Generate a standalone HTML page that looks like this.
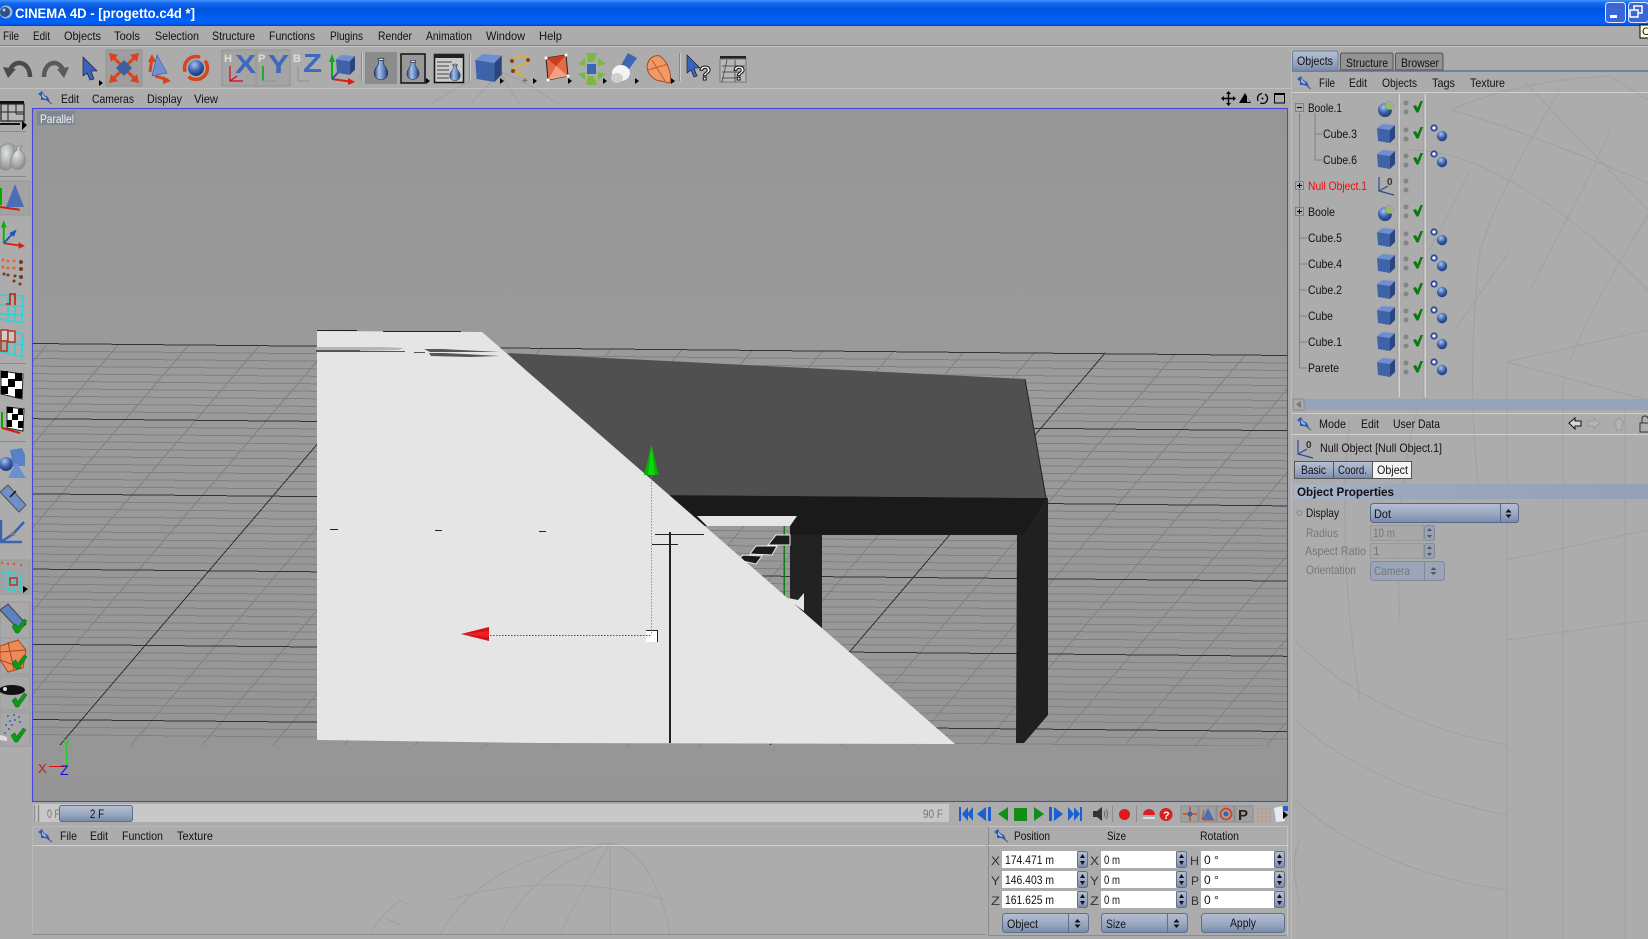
<!DOCTYPE html>
<html><head><meta charset="utf-8"><title>CINEMA 4D</title>
<style>
html,body{margin:0;padding:0;background:#acacac;overflow:hidden}
svg{display:block}
text{font-family:"Liberation Sans",sans-serif;font-size:12px;fill:#111}
.g{fill:#777}
.w{stroke:#a0a0a0;fill:none;stroke-width:1}
</style></head><body>
<svg width="1648" height="939" viewBox="0 0 1648 939" xmlns="http://www.w3.org/2000/svg">
<defs>
<linearGradient id="title" x1="0" y1="0" x2="0" y2="1"><stop offset="0" stop-color="#3d93ff"/><stop offset=".12" stop-color="#1668ee"/><stop offset=".35" stop-color="#0053dd"/><stop offset=".8" stop-color="#0062f8"/><stop offset=".92" stop-color="#005cf0"/><stop offset="1" stop-color="#0042bb"/></linearGradient>
<linearGradient id="vp" x1="0" y1="0" x2="0" y2="1"><stop offset="0" stop-color="#969696"/><stop offset=".4" stop-color="#9b9b9b"/><stop offset="1" stop-color="#959595"/></linearGradient>
<linearGradient id="btn" x1="0" y1="0" x2="0" y2="1"><stop offset="0" stop-color="#b4bfd2"/><stop offset=".6" stop-color="#97a5bf"/><stop offset="1" stop-color="#7888a8"/></linearGradient>
<linearGradient id="band" x1="0" y1="0" x2="1" y2="0"><stop offset="0" stop-color="#a9b4c8"/><stop offset=".3" stop-color="#9aa7bd"/><stop offset="1" stop-color="#94a0b7"/></linearGradient>
<linearGradient id="vase" x1="0" y1="0" x2="1" y2="0"><stop offset="0" stop-color="#24407a"/><stop offset=".35" stop-color="#a9c0e6"/><stop offset=".7" stop-color="#5f82bd"/><stop offset="1" stop-color="#1d3566"/></linearGradient>
<radialGradient id="ball" cx=".4" cy=".3" r=".8"><stop offset="0" stop-color="#a9c2ef"/><stop offset=".5" stop-color="#3d62ad"/><stop offset="1" stop-color="#14295c"/></radialGradient>
<radialGradient id="ballg" cx=".4" cy=".35" r=".8"><stop offset="0" stop-color="#dfe6e6"/><stop offset=".6" stop-color="#a8a8a8"/><stop offset="1" stop-color="#777"/></radialGradient>
<clipPath id="gclip"><polygon points="33,342.500 1287,354.500 1287,746 33,746"/></clipPath>
<clipPath id="zeroclip"><rect x="40" y="804" width="20" height="20"/></clipPath>

<symbol id="pin" viewBox="0 0 16 14" overflow="visible"><polygon points="1,3 5,0 7,4 11,6 13,11 8,9 4,9 4,5" fill="#2f58b0"/><polygon points="5,2 7,5 10,7 8,8 5,6" fill="#9db8ea"/><line x1="11" y1="10" x2="15" y2="13" stroke="#555"/></symbol>
<symbol id="cube" viewBox="0 0 18 19" overflow="visible"><polygon points="0,4 13,6 13,19 1,17" fill="#3f63a8"/><polygon points="0,4 5,0 18,1 13,6" fill="#6f90d0"/><polygon points="13,6 18,1 18,14 13,19" fill="#2b467e"/></symbol>
<symbol id="check" viewBox="0 0 10 12" overflow="visible"><path d="M0 5L3 4L4.500 7L7.500 0H10L5.500 11.500H3.500Z" fill="#087a0e"/></symbol>
<symbol id="dots" viewBox="0 0 6 14" overflow="visible"><circle cx="3" cy="3" r="2.500" fill="#858585"/><circle cx="3" cy="12" r="2.500" fill="#858585"/></symbol>
<symbol id="tag" viewBox="0 0 18 16" overflow="visible"><circle cx="4" cy="4" r="3.600" fill="#2a4b94"/><circle cx="4" cy="4" r="1.700" fill="#eef"/><circle cx="12" cy="12" r="5.200" fill="url(#ball)"/></symbol>
<symbol id="boole" viewBox="0 0 18 18" overflow="visible"><circle cx="8" cy="10" r="7" fill="url(#ball)"/><path d="M8 3A7 7 0 0 1 15 10L10 9Z" fill="#93c24e"/><path d="M9 2C14 1 17 4 17 9" stroke="#a2a2a2" fill="none" stroke-width="2"/></symbol>
<symbol id="nullo" viewBox="0 0 18 20" overflow="visible"><path d="M1 1V15L16 19M1 15L10 10" stroke="#2a4b94" fill="none" stroke-width="1.200"/><text x="9" y="9" style="font-size:10px;font-weight:bold;fill:#333">0</text></symbol>
<symbol id="vases" viewBox="0 0 24 30" overflow="visible"><path d="M9 1h6v6c0 3 6 7 6 13 0 6-4 9-9 9s-9-3-9-9c0-6 6-10 6-13z" fill="url(#vase)" stroke="#1d2a44" stroke-width=".8"/><ellipse cx="12" cy="2" rx="4" ry="1.500" fill="#d5dff0" stroke="#223"/></symbol>
<symbol id="axes" viewBox="0 0 26 30" overflow="visible"><path d="M3 25V6" stroke="#06b00a" stroke-width="2"/><polygon points="3,0 0,8 6,8" fill="#06b00a"/><path d="M3 25L24 28" stroke="#d62010" stroke-width="2"/><polygon points="26,28 19,24 19,31" fill="#d62010"/><path d="M3 25L14 13" stroke="#1a55c4" stroke-width="2"/><polygon points="17,10 9,14 14,18" fill="#1a55c4"/></symbol>
<symbol id="greenck" viewBox="0 0 16 15" overflow="visible"><path d="M0 8L4 5L6 9L13 0L16 2L7 15H4Z" fill="#0a9a14" stroke="#0c5e10" stroke-width=".5"/></symbol>
</defs>

<!-- base -->
<rect width="1648" height="939" fill="#acacac"/>

<!-- faint wireframe -->
<g class="w">
<path d="M1450 110C1490 120 1570 150 1648 183M1451 110C1500 88 1560 78 1610 76L1648 100M1410 150C1480 150 1570 210 1648 290M1525 82C1560 120 1590 150 1648 210"/>
<path d="M1560 90C1530 140 1500 190 1480 250M1610 130C1590 180 1560 230 1530 290M1648 215C1620 260 1590 310 1570 360M1455 330L1510 250M1430 250L1470 170"/>
<path d="M1507 362L1648 330M1507 362L1648 400M1507 362V939M1563 380V939M1625 400V939M1507 560L1648 530M1507 640L1648 620"/>
<path d="M1295 640C1340 690 1420 730 1507 745M1295 720C1350 770 1430 800 1507 815M1295 800C1350 850 1430 880 1507 890"/>
<path d="M1420 400C1400 470 1395 540 1400 620M1350 420C1340 500 1345 600 1360 700M1480 250C1470 340 1470 420 1480 500"/>
<path d="M440 935C470 880 530 850 610 843C640 850 660 880 670 935M500 935C520 890 560 860 610 843M560 935C575 900 595 870 610 843M610 843V935M450 900C510 880 600 880 665 900"/>
<path d="M370 935C380 915 395 905 400 900L410 905M385 918L400 925"/>
<path d="M430 105C450 90 480 75 500 72C520 78 540 92 560 105M470 105L500 72L520 105"/>
<path d="M1300 905C1295 880 1290 860 1300 840"/>
</g>

<!-- title bar -->
<rect width="1648" height="26" fill="url(#title)"/>
<circle cx="6" cy="12" r="6.500" fill="#9fb6cc"/><circle cx="5" cy="12" r="5" fill="#2a4f8a"/><circle cx="4" cy="10" r="1.500" fill="#bcd"/>
<text x="15" y="18" textLength="180" lengthAdjust="spacingAndGlyphs" style="font-size:14px;font-weight:bold;fill:#fff">CINEMA 4D - [progetto.c4d *]</text>
<rect x="1605.500" y="2.500" width="20" height="20" rx="3" fill="#3a66d8" stroke="#dfe8ff"/><rect x="1610" y="15" width="7" height="3" fill="#fff"/>
<rect x="1628.500" y="2.500" width="20" height="20" rx="3" fill="#3a66d8" stroke="#dfe8ff"/><rect x="1634" y="6" width="8" height="7" fill="none" stroke="#fff" stroke-width="1.500"/><rect x="1630" y="10" width="8" height="7" fill="#3a66d8" stroke="#fff" stroke-width="1.500"/>
<rect x="1640" y="25" width="9" height="13" fill="#ffffe1" stroke="#000"/><text x="1642" y="35" style="font-size:11px">C</text>

<!-- main menu -->
<g>
<text x="3" y="40" textLength="16" lengthAdjust="spacingAndGlyphs">File</text>
<text x="33" y="40" textLength="17" lengthAdjust="spacingAndGlyphs">Edit</text>
<text x="64" y="40" textLength="37" lengthAdjust="spacingAndGlyphs">Objects</text>
<text x="114" y="40" textLength="26" lengthAdjust="spacingAndGlyphs">Tools</text>
<text x="155" y="40" textLength="44" lengthAdjust="spacingAndGlyphs">Selection</text>
<text x="212" y="40" textLength="43" lengthAdjust="spacingAndGlyphs">Structure</text>
<text x="269" y="40" textLength="46" lengthAdjust="spacingAndGlyphs">Functions</text>
<text x="330" y="40" textLength="33" lengthAdjust="spacingAndGlyphs">Plugins</text>
<text x="378" y="40" textLength="34" lengthAdjust="spacingAndGlyphs">Render</text>
<text x="426" y="40" textLength="46" lengthAdjust="spacingAndGlyphs">Animation</text>
<text x="486" y="40" textLength="39" lengthAdjust="spacingAndGlyphs">Window</text>
<text x="539" y="40" textLength="23" lengthAdjust="spacingAndGlyphs">Help</text>
</g>
<rect y="45" width="1648" height="1" fill="#7e7e7e"/><rect y="46" width="1648" height="1" fill="#c9c9c9"/>
<rect x="0" y="88" width="1292" height="1" fill="#c0c0c0"/>

<!-- top toolbar -->
<path d="M30 77C30 62 15 58 10 70" fill="none" stroke="#4a4a4a" stroke-width="4.500"/><polygon points="3,67 16,69 8,78" fill="#4a4a4a"/>
<path d="M44 77C44 62 58 58 63 70" fill="none" stroke="#5a5a5a" stroke-width="4.500"/><polygon points="69,67 57,69 64,78" fill="#5a5a5a"/>
<polygon points="83,57 97,71 91,71 94,79 90,80 87,73 83,76" fill="#3a62c0" stroke="#112" stroke-width=".6"/><polygon points="99,80 103,83 99,86" fill="#000"/>
<rect x="106" y="50" width="36" height="36" fill="#9e9e9e" stroke="#929292"/>
<path d="M112 56L136 80M136 56L112 80" stroke="#d8431c" stroke-width="3"/><polygon points="109,53 118,55 111,62" fill="#d8431c"/><polygon points="139,53 130,55 137,62" fill="#d8431c"/><polygon points="109,83 118,81 111,74" fill="#d8431c"/><polygon points="139,83 130,81 137,74" fill="#d8431c"/><polygon points="124,60 132,68 124,76 116,68" fill="#3f5f9f"/>
<polygon points="157,55 167,73 152,76" fill="#6f90cf" stroke="#3a5a9a" stroke-width=".6"/><path d="M150 72L152 58M155 76L168 80" stroke="#d8431c" stroke-width="3"/><polygon points="152,54 148,62 156,62" fill="#d8431c"/><polygon points="171,81 163,76 163,84" fill="#d8431c"/>
<circle cx="196" cy="68" r="8" fill="url(#ball)"/><circle cx="196" cy="68" r="11.500" fill="none" stroke="#d8431c" stroke-width="3.500" stroke-dasharray="26 6"/>
<rect x="222" y="50" width="34" height="36" fill="#a4a4a4" stroke="#959595"/><rect x="256" y="50" width="34" height="36" fill="#a4a4a4" stroke="#959595"/>
<text x="224" y="62" style="font-size:11px;font-weight:bold;fill:#ddd">H</text><text x="258" y="62" style="font-size:11px;font-weight:bold;fill:#ddd">P</text><text x="293" y="62" style="font-size:11px;font-weight:bold;fill:#ddd">B</text>
<text x="235" y="73" style="font-size:26px;font-weight:bold;fill:#3f69bb" textLength="21" lengthAdjust="spacingAndGlyphs">X</text>
<text x="268" y="73" style="font-size:26px;font-weight:bold;fill:#3f69bb" textLength="21" lengthAdjust="spacingAndGlyphs">Y</text>
<text x="303" y="72" style="font-size:26px;font-weight:bold;fill:#3f69bb" textLength="19" lengthAdjust="spacingAndGlyphs">Z</text>
<path d="M230 66V81H243M230 81L237 76" stroke="#d02" stroke-width="1.200" fill="none"/><path d="M263 66V81" stroke="#0a0" stroke-width="1.500"/><path d="M263 81H276" stroke="#999" stroke-width="1.500"/><path d="M298 66V81H310" stroke="#999" stroke-width="1.500" fill="none"/>
<use href="#axes" x="329" y="54" width="26" height="30"/><use href="#cube" x="336" y="54" width="19" height="22"/>
<rect x="361" y="53" width="1" height="28" fill="#888"/><rect x="362" y="53" width="1" height="28" fill="#ccc"/>
<rect x="365" y="52" width="32" height="32" fill="#8c8c8c"/><use href="#vases" x="372" y="56" width="18" height="26"/>
<rect x="401" y="54" width="24" height="29" fill="#989898" stroke="#111" stroke-width="1.500"/><use href="#vases" x="405" y="58" width="16" height="24"/><polygon points="426,78 430,81 426,84" fill="#000"/>
<rect x="434.500" y="54.500" width="29" height="28" fill="#ccc" stroke="#111" stroke-width="1.500"/><rect x="434" y="54" width="30" height="4" fill="#222"/><path d="M437 62h15M437 66h12M437 70h12M437 74h12M437 78h12" stroke="#444"/><use href="#vases" x="448" y="62" width="14" height="21"/>
<rect x="469" y="53" width="1" height="28" fill="#888"/><rect x="470" y="53" width="1" height="28" fill="#ccc"/>
<use href="#cube" x="475" y="54" width="27" height="28"/><polygon points="500,78 504,81 500,84" fill="#000"/>
<path d="M512 61C520 52 532 56 528 61C524 66 514 66 512 71C512 74 522 72 524 77" fill="none" stroke="#d9b13a" stroke-width="2"/><circle cx="512" cy="61" r="2" fill="#8a3d1c"/><circle cx="528" cy="60" r="2" fill="#8a3d1c"/><circle cx="513" cy="71" r="2" fill="#8a3d1c"/><text x="522" y="84" style="font-size:10px;fill:#555">+</text><polygon points="533,78 537,81 533,84" fill="#000"/>
<polygon points="546,58 566,55 568,76 548,80" fill="#e56b43" stroke="#222"/><polygon points="546,58 556,66 566,55" fill="#c6401e"/><polygon points="548,80 556,66 568,76" fill="#f2a184"/><circle cx="546" cy="58" r="1.500" fill="#fff"/><circle cx="566" cy="55" r="1.500" fill="#fff"/><circle cx="548" cy="80" r="1.500" fill="#fff"/><circle cx="568" cy="76" r="1.500" fill="#fff"/><polygon points="568,78 572,81 568,84" fill="#000"/>
<rect x="587" y="64" width="9" height="10" fill="#3b66b8"/><polygon points="586,53 597,53 594,62 588,62" fill="#7bba42"/><polygon points="586,85 597,85 594,76 588,76" fill="#7bba42"/><polygon points="578,64 585,58 585,66" fill="#7bba42"/><polygon points="578,74 585,80 585,72" fill="#7bba42"/><polygon points="606,64 598,58 598,66" fill="#7bba42"/><polygon points="606,74 598,80 598,72" fill="#7bba42"/><polygon points="603,78 607,81 603,84" fill="#000"/>
<polygon points="628,53 637,58 627,72 620,67" fill="#3d66b4"/><ellipse cx="621" cy="73" rx="9" ry="8" fill="#f4f4f4"/><ellipse cx="617" cy="78" rx="6" ry="5" fill="#cfcfcf"/><polygon points="635,78 639,81 635,84" fill="#000"/>
<path d="M647 66C649 56 656 55 660 56C668 62 672 74 670 83L656 80C650 76 647 72 647 66Z" fill="#f09a6a" stroke="#a64a20"/><path d="M652 60L665 81M648 70L668 64" stroke="#c8582a" fill="none"/><polygon points="671,78 675,81 671,84" fill="#000"/>
<rect x="679" y="53" width="1" height="28" fill="#888"/><rect x="680" y="53" width="1" height="28" fill="#ccc"/>
<polygon points="687,55 700,68 694,68 697,76 694,77 691,70 687,73" fill="#3a62c0" stroke="#112" stroke-width=".6"/>
<text x="699" y="80" style="font-size:20px;font-weight:bold;fill:#fff;stroke:#111;stroke-width:1">?</text>
<rect x="720" y="56" width="26" height="3" fill="#222"/><rect x="720" y="59" width="26" height="23" fill="#b8b8b8" stroke="#777"/><path d="M722 66H745M722 72H740M722 78H740M727 60L722 82M735 60V82" stroke="#555"/>
<text x="733" y="80" style="font-size:20px;font-weight:bold;fill:#fff;stroke:#111;stroke-width:1">?</text>

<!-- left toolbar -->
<g>
<rect x="0" y="131" width="26" height="1" fill="#8a8a8a"/><rect x="0" y="176" width="26" height="1" fill="#8a8a8a"/><rect x="0" y="363" width="26" height="1" fill="#8a8a8a"/><rect x="0" y="441" width="26" height="1" fill="#8a8a8a"/>
<rect x="0" y="101" width="24" height="3" fill="#111"/><rect x="1" y="104" width="23" height="17" fill="#b8b8b8" stroke="#222" stroke-width="1.200"/><path d="M8 104V121M16 104V114M1 112H24M16 114H24" stroke="#222"/><path d="M0 124H20" stroke="#111" stroke-width="2"/><polygon points="22,121 27,125 22,130" fill="#000"/>
<path d="M0 148C3 144 10 142 14 146C16 152 15 164 9 169C5 171 1 170 0 167Z" fill="url(#ballg)" stroke="#8f8f8f"/><path d="M16 146H22L20 150C25 154 27 160 24 166C20 171 14 170 11 166C9 158 14 152 17 150Z" fill="url(#ballg)" stroke="#8f8f8f"/>
<rect x="0" y="181" width="30" height="34" fill="#a3a3a3" stroke="#999"/><polygon points="15,184 24,207 6,207" fill="#4a6fb6"/><path d="M0 207H20" stroke="#d02010" stroke-width="2" transform="rotate(8 0 207)"/><path d="M1 205V188" stroke="#0a0" stroke-width="2"/>
<use href="#axes" x="1" y="219" width="24" height="30"/>
<g fill="#e5672a"><circle cx="3" cy="260" r="1.500"/><circle cx="8" cy="261" r="1.500"/><circle cx="14" cy="261" r="1.500"/><circle cx="3" cy="267" r="1.500"/><circle cx="8" cy="268" r="1.500"/><circle cx="14" cy="268" r="1.500"/></g><g fill="#7a3a1a"><circle cx="21" cy="262" r="2"/><circle cx="21" cy="269" r="2"/><circle cx="21" cy="277" r="2"/><circle cx="15" cy="276" r="1.500"/><circle cx="8" cy="275" r="1.500"/><circle cx="14" cy="281" r="1.500"/><circle cx="4" cy="274" r="1.500"/><circle cx="20" cy="284" r="1.500"/></g>
<path d="M0 295L23 296L22 323L0 319M0 305L23 306M0 314L22 315M8 295V319M15 296V321" fill="none" stroke="#19d8df" stroke-width="1.300"/><path d="M6 304H10V294H15V305" fill="none" stroke="#b5371f" stroke-width="1.800"/>
<path d="M1 330L23 334L22 357L1 352ZM1 341L23 345M8 330V353M15 332V356" fill="none" stroke="#19d8df" stroke-width="1.300"/><rect x="1" y="330" width="7" height="11" fill="#cfcfcf" stroke="#b5371f" stroke-width="1.500"/><rect x="8" y="331" width="7" height="11" fill="#c7c7c7" stroke="#b5371f" stroke-width="1.500"/><rect x="1" y="341" width="6" height="10" fill="#aaa" stroke="#b5371f" stroke-width="1.500"/>
<polygon points="1,371 23,374 22,399 1,394" fill="#fff" stroke="#222"/><g fill="#000"><rect x="1" y="371" width="7" height="7"/><rect x="15" y="373" width="7" height="8"/><rect x="8" y="379" width="7" height="8"/><rect x="1" y="386" width="7" height="8"/><rect x="15" y="389" width="7" height="9"/></g>
<polygon points="7,407 24,409 23,431 7,428" fill="#fff" stroke="#222"/><g fill="#000"><rect x="7" y="407" width="6" height="6"/><rect x="18" y="409" width="5" height="6"/><rect x="12" y="414" width="6" height="6"/><rect x="7" y="420" width="5" height="7"/><rect x="18" y="421" width="5" height="7"/></g><path d="M2 428V412" stroke="#0a0" stroke-width="2"/><path d="M2 428L20 433" stroke="#d02010" stroke-width="2"/>
<circle cx="6" cy="464" r="7" fill="url(#ball)"/><polygon points="10,450 22,448 25,455 25,466 13,466" fill="#5a80c6"/><polygon points="16,462 26,478 8,478" fill="#6b90d2"/>
<polygon points="0,492 8,485 26,505 19,512" fill="#6f8fc8" stroke="#555" stroke-width="1"/><path d="M10 497L16 491" stroke="#112" stroke-width="1.500"/>
<path d="M1 520V542H22M1 542L13 534L24 522" stroke="#3a62ad" stroke-width="2.500" fill="none"/><circle cx="13" cy="534" r="2" fill="#777"/>
<rect x="0" y="560" width="30" height="34" fill="#a3a3a3" stroke="#999"/><path d="M3 572L21 574L20 592L4 589ZM3 581L21 583M9 572V590M15 573V591" fill="none" stroke="#19d8df"/><rect x="10" y="578" width="7" height="7" fill="none" stroke="#b5371f" stroke-width="1.500"/><g fill="#d8562a"><circle cx="2" cy="563" r="1.200"/><circle cx="8" cy="564" r="1.200"/><circle cx="14" cy="564" r="1.200"/><circle cx="21" cy="565" r="1.200"/></g><polygon points="23,586 28,589 23,593" fill="#000"/>
<rect x="0" y="602" width="30" height="36" fill="#a8a8a8" stroke="#999"/><polygon points="0,610 8,604 26,624 19,630" fill="#5f81c0" stroke="#444"/><use href="#greenck" x="12" y="617" width="15" height="18"/>
<rect x="0" y="638" width="30" height="36" fill="#a8a8a8" stroke="#999"/><polygon points="0,646 18,640 26,650 23,668 8,672 0,660" fill="#ee8a5a" stroke="#a8481f"/><path d="M0 652L26 650M0 660L22 668M8 642L14 670" stroke="#a8481f" fill="none"/><use href="#greenck" x="12" y="653" width="15" height="18"/>
<rect x="0" y="676" width="30" height="34" fill="#a8a8a8" stroke="#999"/><ellipse cx="12" cy="690" rx="13" ry="5" fill="#111"/><circle cx="5" cy="689" r="2" fill="#ddd"/><use href="#greenck" x="12" y="691" width="15" height="18"/>
<rect x="0" y="712" width="30" height="34" fill="#a8a8a8" stroke="#999"/><g fill="#3a62b0"><circle cx="8" cy="716" r="1"/><circle cx="14" cy="715" r="1"/><circle cx="19" cy="717" r="1"/><circle cx="10" cy="721" r="1"/><circle cx="15" cy="720" r="1"/><circle cx="6" cy="725" r="1"/><circle cx="12" cy="725" r="1"/><circle cx="20" cy="722" r="1"/><circle cx="9" cy="729" r="1"/><circle cx="5" cy="733" r="1"/></g><polygon points="0,735 7,737 7,741 0,740" fill="#ddd"/><use href="#greenck" x="11" y="726" width="15" height="18"/>
</g>

<!-- viewport menu -->
<use href="#pin" x="37" y="91" width="16" height="14"/>
<text x="61" y="103" textLength="18" lengthAdjust="spacingAndGlyphs">Edit</text>
<text x="92" y="103" textLength="42" lengthAdjust="spacingAndGlyphs">Cameras</text>
<text x="147" y="103" textLength="35" lengthAdjust="spacingAndGlyphs">Display</text>
<text x="194" y="103" textLength="24" lengthAdjust="spacingAndGlyphs">View</text>
<path d="M1222 98.500H1235M1228.500 92V105" stroke="#000" stroke-width="1.500"/><polygon points="1228.500,91 1226,94 1231,94" fill="#000"/><polygon points="1228.500,106 1226,103 1231,103" fill="#000"/><polygon points="1221,98.500 1224,96 1224,101" fill="#000"/><polygon points="1236,98.500 1233,96 1233,101" fill="#000"/>
<polygon points="1245,93 1239,103 1251,103" fill="#000"/><polygon points="1247,96 1250,102 1247,102" fill="#aaa"/>
<circle cx="1262.500" cy="98.500" r="5" fill="none" stroke="#000" stroke-width="1.300" stroke-dasharray="10 3"/><circle cx="1262.500" cy="98.500" r="1" fill="#000"/>
<rect x="1274.500" y="93.500" width="10" height="9.500" fill="none" stroke="#000"/><rect x="1274" y="93" width="11" height="2" fill="#000"/>

<!-- viewport -->
<rect x="33" y="108" width="1255" height="693" fill="url(#vp)"/>
<g clip-path="url(#gclip)" shape-rendering="crispEdges" fill="none">
<path stroke="#808080" stroke-width="1" d="M33 351l1255 12M33 358.500l1255 12M33 366.100l1255 12M33 373.600l1255 12M33 381.100l1255 12M33 388.600l1255 12M33 396.100l1255 12M33 403.700l1255 12M33 411.200l1255 12M33 426.200l1255 12M33 433.700l1255 12M33 441.300l1255 12M33 448.800l1255 12M33 456.300l1255 12M33 463.800l1255 12M33 471.300l1255 12M33 478.900l1255 12M33 486.400l1255 12M33 501.400l1255 12M33 508.900l1255 12M33 516.500l1255 12M33 524l1255 12M33 531.500l1255 12M33 539l1255 12M33 546.500l1255 12M33 554.100l1255 12M33 561.600l1255 12M33 576.600l1255 12M33 584.100l1255 12M33 591.700l1255 12M33 599.200l1255 12M33 606.700l1255 12M33 614.200l1255 12M33 621.700l1255 12M33 629.300l1255 12M33 636.800l1255 12M33 651.800l1255 12M33 659.300l1255 12M33 666.900l1255 12M33 674.400l1255 12M33 681.900l1255 12M33 689.400l1255 12M33 696.900l1255 12M33 704.500l1255 12M33 712l1255 12M33 727l1255 12M33 734.500l1255 12"/>
<path stroke="#808080" d="M-295 745l342 -400M-224 745l342 -400M-153 745l342 -400M-82 745l342 -400M-11 745l342 -400M131 745l342 -400M202 745l342 -400M273 745l342 -400M344 745l342 -400M415 745l342 -400M486 745l342 -400M557 745l342 -400M628 745l342 -400M699 745l342 -400M841 745l342 -400M912 745l342 -400M983 745l342 -400M1054 745l342 -400M1125 745l342 -400M1196 745l342 -400M1267 745l342 -400"/>
<path stroke="#333" d="M33 343.500l1255 12M33 418.700l1255 12M33 493.900l1255 12M33 569.100l1255 12M33 644.300l1255 12M33 719.500l1255 12"/>
<path stroke="#303030" d="M60 745l342 -400M770 745l342 -400"/>
</g>
<!-- model -->
<polygon points="507,353 1025,379 1046,498 660,495" fill="#505050"/>
<path d="M1025 379L1046 498" stroke="#222"/>
<polygon points="660,495 1048,498 1025,535 790,535 790,526 700,526" fill="#1a1a1a"/>
<polygon points="1048,498 1048,715 1024,743 1016,743 1017,535 1025,535" fill="#202020"/>
<rect x="790" y="535" width="32" height="96" fill="#222"/>
<rect x="783.500" y="526" width="1.500" height="72" fill="#0e7d12"/>
<polygon points="768,545 776,535 790,535 790,545" fill="#1a1a1a" stroke="#eee"/>
<polygon points="750,554 756,546 777,546 772,555" fill="#1a1a1a" stroke="#eee"/>
<polygon points="738,560 743,555 762,556 756,564" fill="#1a1a1a" stroke="#eee"/>
<polygon points="697,516 797,516 790,526 707,526" fill="#e5e5e5"/>
<polygon points="317,331 482,332 955,744 537,743 317,740" fill="#e5e5e5"/>
<polygon points="788,598 798,600 804,593 804,611 790,601" fill="#e5e5e5"/>
<!-- wall details -->
<rect x="317" y="330" width="40" height="1" fill="#222"/><rect x="383" y="331" width="78" height="1" fill="#222"/>
<polygon points="316,347 381,347 404,348 398,350 360,351 316,351" fill="#b5b5b5"/>
<rect x="316" y="350" width="44" height="2" fill="#555"/><rect x="360" y="351" width="45" height="1" fill="#555"/>
<polygon points="424,349 442,349 500,352 450,352 430,352" fill="#555"/><polygon points="429,353 444,353 464,354 500,356 470,357 431,356" fill="#555"/><rect x="414" y="352" width="11" height="1" fill="#555"/>
<rect x="330" y="529" width="8" height="1" fill="#222"/><rect x="435" y="530" width="7" height="1" fill="#222"/><rect x="539" y="531" width="7" height="1" fill="#222"/>
<rect x="669" y="532" width="2" height="211" fill="#222"/><rect x="655" y="534" width="49" height="1" fill="#222"/><rect x="652" y="544" width="26" height="1" fill="#222"/>
<!-- axis handle -->
<rect x="646" y="630" width="11" height="12" fill="#fff"/><path d="M646 630.500H657.500V642" stroke="#222" fill="none"/>
<line x1="651.500" y1="476" x2="651.500" y2="635" stroke="#2ed62e" stroke-dasharray="1.500 1.500"/>
<line x1="490" y1="635.500" x2="652" y2="635.500" stroke="#c02020" stroke-dasharray="1.500 1.500"/>
<polygon points="651.500,445 658.500,475 644,475" fill="#00b400"/><polygon points="651.500,445 655,475 648,475" fill="#12d012"/>
<polygon points="461,634 489,627 489,641" fill="#d41212"/><polygon points="461,634 489,631 489,637" fill="#e92222"/>
<!-- mini axes -->
<rect x="66" y="748" width="1.500" height="18" fill="#1ed11e"/><rect x="49" y="766" width="18" height="1" fill="#e01010"/>
<text x="62" y="748" style="font-size:13px;fill:#1ed11e">Y</text><text x="38" y="773" style="font-size:13px;fill:#c81818">X</text><text x="60" y="775" style="font-size:14px;fill:#1111dd">Z</text>
<rect x="37" y="111" width="38" height="14" rx="1" fill="#7f8791"/><text x="40" y="123" textLength="34" lengthAdjust="spacingAndGlyphs" style="fill:#f0f0f0">Parallel</text>
<rect x="32.500" y="108.500" width="1255" height="693" fill="none" stroke="#4848e0" stroke-width="1.100"/>

<!-- timeline -->
<rect x="33" y="804" width="916" height="18" fill="#c8c8c8"/>
<path d="M34.500 805V822M38.500 805V822" stroke="#8c8c8c" stroke-width="1.500"/>
<text x="47" y="818" class="g" textLength="13" lengthAdjust="spacingAndGlyphs" clip-path="url(#zeroclip)">0 F</text>
<rect x="59.500" y="805.500" width="73" height="16" rx="2" fill="url(#btn)" stroke="#5f6f90"/>
<text x="90" y="818" textLength="14" lengthAdjust="spacingAndGlyphs">2 F</text>
<text x="923" y="818" class="g" textLength="20" lengthAdjust="spacingAndGlyphs">90 F</text>
<!-- transport -->
<g fill="#1c5fd0"><rect x="959" y="807" width="2" height="14"/><polygon points="962,814 968,807 968,821"/><polygon points="967,814 973,807 973,821"/><polygon points="977,814 986,807 986,821"/><rect x="988" y="807" width="3" height="14"/><rect x="1049" y="807" width="3" height="14"/><polygon points="1054,807 1063,814 1054,821"/><polygon points="1068,807 1074,814 1068,821"/><polygon points="1074,807 1080,814 1074,821"/><rect x="1080" y="807" width="2" height="14"/></g>
<polygon points="998,814 1008,807 1008,821" fill="#118d18"/><rect x="1014" y="808" width="13" height="13" fill="#118d18"/><polygon points="1034,807 1044,814 1034,821" fill="#118d18"/>
<polygon points="1093,811 1097,811 1102,807 1102,821 1097,817 1093,817" fill="#333"/><path d="M1104 811C1105 813 1105 815 1104 817M1106 809C1108 812 1108 816 1106 819" stroke="#666" fill="none"/>
<rect x="1112" y="806" width="1" height="16" fill="#8c8c8c"/><circle cx="1124.500" cy="814.500" r="5.500" fill="#e01818"/><rect x="1136" y="806" width="1" height="16" fill="#8c8c8c"/>
<path d="M1143 815A6 6 0 0 1 1155 815Z" fill="#d82020"/><path d="M1143 818H1155" stroke="#ddd" stroke-width="2"/>
<circle cx="1166" cy="814.500" r="6.500" fill="#d82020"/><text x="1163" y="819" style="font-size:11px;font-weight:bold;fill:#fff">?</text>
<rect x="1181" y="806" width="17" height="16" fill="#a0a0a0" stroke="#8c8c8c"/><path d="M1190 807V821M1183 814H1197" stroke="#d8431c" stroke-width="1.500"/><circle cx="1190" cy="814" r="2.500" fill="#3f5f9f"/>
<rect x="1199" y="806" width="17" height="16" fill="#a0a0a0" stroke="#8c8c8c"/><polygon points="1208,808 1214,820 1202,820" fill="#4a6fb6"/><path d="M1202 820L1204 810M1203 820H1214" stroke="#d8431c"/>
<rect x="1217" y="806" width="17" height="16" fill="#a0a0a0" stroke="#8c8c8c"/><circle cx="1226" cy="814" r="5.500" fill="none" stroke="#d8431c" stroke-width="1.800"/><circle cx="1226" cy="814" r="2.500" fill="#3f5f9f"/>
<rect x="1235" y="806" width="18" height="16" fill="#a0a0a0" stroke="#8c8c8c"/><text x="1238" y="820" style="font-size:15px;font-weight:bold;fill:#222">P</text>
<g fill="#e8794a"><circle cx="1258" cy="809" r=".8"/><circle cx="1262" cy="809" r=".8"/><circle cx="1266" cy="809" r=".8"/><circle cx="1270" cy="809" r=".8"/><circle cx="1258" cy="813" r=".8"/><circle cx="1262" cy="813" r=".8"/><circle cx="1266" cy="813" r=".8"/><circle cx="1270" cy="813" r=".8"/><circle cx="1258" cy="817" r=".8"/><circle cx="1262" cy="817" r=".8"/><circle cx="1266" cy="817" r=".8"/><circle cx="1270" cy="817" r=".8"/><circle cx="1258" cy="821" r=".8"/><circle cx="1262" cy="821" r=".8"/><circle cx="1266" cy="821" r=".8"/><circle cx="1270" cy="821" r=".8"/></g>
<polygon points="1274,808 1282,806 1285,821 1276,822" fill="#e5e9f2"/><rect x="1283" y="806" width="5" height="5" fill="#2f5fc0"/><polygon points="1283,811 1288,815 1283,819" fill="#000"/>

<!-- bottom left panel -->
<use href="#pin" x="37" y="829" width="16" height="14"/>
<text x="60" y="840" textLength="17" lengthAdjust="spacingAndGlyphs">File</text>
<text x="90" y="840" textLength="18" lengthAdjust="spacingAndGlyphs">Edit</text>
<text x="122" y="840" textLength="41" lengthAdjust="spacingAndGlyphs">Function</text>
<text x="177" y="840" textLength="36" lengthAdjust="spacingAndGlyphs">Texture</text>
<rect x="33" y="845" width="953" height="1" fill="#cfcfcf"/><rect x="33" y="826" width="953" height="1" fill="#b8b8b8"/>
<rect x="32" y="934" width="954" height="1" fill="#8c8c8c"/><rect x="32" y="826" width="1" height="108" fill="#b8b8b8"/>

<!-- coordinates -->
<rect x="988" y="826" width="1" height="110" fill="#8c8c8c"/><rect x="988" y="826" width="300" height="1" fill="#c4c4c4"/><rect x="988" y="935" width="300" height="1" fill="#8c8c8c"/><rect x="1287" y="826" width="1" height="110" fill="#c4c4c4"/>
<rect x="988" y="845" width="300" height="1" fill="#cfcfcf"/>
<use href="#pin" x="993" y="829" width="16" height="14"/>
<text x="1014" y="840" textLength="36" lengthAdjust="spacingAndGlyphs">Position</text>
<text x="1107" y="840" textLength="19" lengthAdjust="spacingAndGlyphs">Size</text>
<text x="1200" y="840" textLength="39" lengthAdjust="spacingAndGlyphs">Rotation</text>
<g fill="#fff">
<rect x="1002" y="851" width="75" height="17"/><rect x="1002" y="871" width="75" height="17"/><rect x="1002" y="891" width="75" height="17"/>
<rect x="1101" y="851" width="75" height="17"/><rect x="1101" y="871" width="75" height="17"/><rect x="1101" y="891" width="75" height="17"/>
<rect x="1201" y="851" width="73" height="17"/><rect x="1201" y="871" width="73" height="17"/><rect x="1201" y="891" width="73" height="17"/>
</g>
<g fill="url(#btn)" stroke="#5f6f90">
<rect x="1077.500" y="851.500" width="10" height="16" rx="2"/><rect x="1077.500" y="871.500" width="10" height="16" rx="2"/><rect x="1077.500" y="891.500" width="10" height="16" rx="2"/>
<rect x="1176.500" y="851.500" width="10" height="16" rx="2"/><rect x="1176.500" y="871.500" width="10" height="16" rx="2"/><rect x="1176.500" y="891.500" width="10" height="16" rx="2"/>
<rect x="1274.500" y="851.500" width="10" height="16" rx="2"/><rect x="1274.500" y="871.500" width="10" height="16" rx="2"/><rect x="1274.500" y="891.500" width="10" height="16" rx="2"/>
</g>
<g fill="#111">
<path d="M1082.500 854l-2.500 4h5zM1082.500 865l-2.500-4h5zM1082.500 874l-2.500 4h5zM1082.500 885l-2.500-4h5zM1082.500 894l-2.500 4h5zM1082.500 905l-2.500-4h5z"/>
<path d="M1181.500 854l-2.500 4h5zM1181.500 865l-2.500-4h5zM1181.500 874l-2.500 4h5zM1181.500 885l-2.500-4h5zM1181.500 894l-2.500 4h5zM1181.500 905l-2.500-4h5z"/>
<path d="M1279.500 854l-2.500 4h5zM1279.500 865l-2.500-4h5zM1279.500 874l-2.500 4h5zM1279.500 885l-2.500-4h5zM1279.500 894l-2.500 4h5zM1279.500 905l-2.500-4h5z"/>
</g>
<text x="991" y="865" textLength="9" lengthAdjust="spacingAndGlyphs" style="fill:#333">X</text><text x="991" y="885" textLength="9" lengthAdjust="spacingAndGlyphs" style="fill:#333">Y</text><text x="991" y="905" textLength="9" lengthAdjust="spacingAndGlyphs" style="fill:#333">Z</text>
<text x="1090" y="865" textLength="9" lengthAdjust="spacingAndGlyphs" style="fill:#333">X</text><text x="1090" y="885" textLength="9" lengthAdjust="spacingAndGlyphs" style="fill:#333">Y</text><text x="1090" y="905" textLength="9" lengthAdjust="spacingAndGlyphs" style="fill:#333">Z</text>
<text x="1190" y="865" textLength="9" lengthAdjust="spacingAndGlyphs" style="fill:#333">H</text><text x="1191" y="885" textLength="8" lengthAdjust="spacingAndGlyphs" style="fill:#333">P</text><text x="1191" y="905" textLength="8" lengthAdjust="spacingAndGlyphs" style="fill:#333">B</text>
<text x="1005" y="864" textLength="49" lengthAdjust="spacingAndGlyphs">174.471 m</text>
<text x="1005" y="884" textLength="49" lengthAdjust="spacingAndGlyphs">146.403 m</text>
<text x="1005" y="904" textLength="49" lengthAdjust="spacingAndGlyphs">161.625 m</text>
<text x="1104" y="864" textLength="16" lengthAdjust="spacingAndGlyphs">0 m</text><text x="1104" y="884" textLength="16" lengthAdjust="spacingAndGlyphs">0 m</text><text x="1104" y="904" textLength="16" lengthAdjust="spacingAndGlyphs">0 m</text>
<text x="1204" y="864">0 °</text><text x="1204" y="884">0 °</text><text x="1204" y="904">0 °</text>
<rect x="1002.500" y="913.500" width="86" height="19" rx="3" fill="url(#btn)" stroke="#5f6f90"/><rect x="1068" y="914" width="1" height="18" fill="#5f6f90"/>
<text x="1007" y="928" textLength="31" lengthAdjust="spacingAndGlyphs">Object</text><path d="M1077.500 919l-3 3.500h6zM1077.500 928l-3-3.500h6z" fill="#111"/>
<rect x="1101.500" y="913.500" width="86" height="19" rx="3" fill="url(#btn)" stroke="#5f6f90"/><rect x="1167" y="914" width="1" height="18" fill="#5f6f90"/>
<text x="1106" y="928" textLength="20" lengthAdjust="spacingAndGlyphs">Size</text><path d="M1176.500 919l-3 3.500h6zM1176.500 928l-3-3.500h6z" fill="#111"/>
<rect x="1201.500" y="913.500" width="83" height="19" rx="3" fill="url(#btn)" stroke="#5f6f90"/>
<text x="1230" y="927" textLength="26" lengthAdjust="spacingAndGlyphs">Apply</text>

<!-- right panel: tabs -->
<rect x="1291" y="70" width="357" height="2" fill="#6c82a3"/>
<path d="M1292.500 71V54Q1292.500 51 1295 51H1336Q1338 51 1338 54V71Z" fill="url(#btn)" stroke="#6c7c99"/>
<path d="M1340.500 70V55Q1340.500 53 1343 53H1391Q1393 53 1393 55V70Z" fill="#939393" stroke="#555"/>
<path d="M1395.500 70V55Q1395.500 53 1398 53H1441Q1443 53 1443 55V70Z" fill="#939393" stroke="#555"/>
<text x="1297" y="65" textLength="36" lengthAdjust="spacingAndGlyphs">Objects</text>
<text x="1346" y="67" textLength="42" lengthAdjust="spacingAndGlyphs">Structure</text>
<text x="1401" y="67" textLength="38" lengthAdjust="spacingAndGlyphs">Browser</text>
<use href="#pin" x="1296" y="76" width="16" height="14"/>
<text x="1319" y="87" textLength="16" lengthAdjust="spacingAndGlyphs">File</text>
<text x="1349" y="87" textLength="18" lengthAdjust="spacingAndGlyphs">Edit</text>
<text x="1382" y="87" textLength="35" lengthAdjust="spacingAndGlyphs">Objects</text>
<text x="1432" y="87" textLength="23" lengthAdjust="spacingAndGlyphs">Tags</text>
<text x="1470" y="87" textLength="35" lengthAdjust="spacingAndGlyphs">Texture</text>
<rect x="1292" y="92" width="356" height="1" fill="#d0d0d0"/>
<rect x="1291" y="50" width="1" height="890" fill="#bdbdbd"/>
<rect x="1398.500" y="94" width="1.300" height="303" fill="#dcdcdc"/><rect x="1424.500" y="94" width="1.300" height="303" fill="#dcdcdc"/>
<rect x="1397.500" y="94" width="1" height="303" fill="#8a8a8a" opacity=".5"/><rect x="1423.500" y="94" width="1" height="303" fill="#8a8a8a" opacity=".5"/>

<!-- tree lines -->
<path d="M1299.500 113V368H1307M1315 113V160H1322M1315 134H1322M1299.500 238H1307M1299.500 264H1307M1299.500 290H1307M1299.500 316H1307M1299.500 342H1307" stroke="#808080" fill="none"/>
<g fill="#acacac" stroke="#808080"><rect x="1295.500" y="103.500" width="8" height="8"/><rect x="1295.500" y="181.500" width="8" height="8"/><rect x="1295.500" y="207.500" width="8" height="8"/></g>
<path d="M1297 107.500H1302M1297 185.500H1302M1299.500 183V188M1297 211.500H1302M1299.500 209V214" stroke="#000"/>
<text x="1308" y="112" textLength="34" lengthAdjust="spacingAndGlyphs">Boole.1</text>
<text x="1323" y="138" textLength="34" lengthAdjust="spacingAndGlyphs">Cube.3</text>
<text x="1323" y="164" textLength="34" lengthAdjust="spacingAndGlyphs">Cube.6</text>
<text x="1308" y="190" textLength="59" lengthAdjust="spacingAndGlyphs" style="fill:#f00a0a">Null Object.1</text>
<text x="1308" y="216" textLength="27" lengthAdjust="spacingAndGlyphs">Boole</text>
<text x="1308" y="242" textLength="34" lengthAdjust="spacingAndGlyphs">Cube.5</text>
<text x="1308" y="268" textLength="34" lengthAdjust="spacingAndGlyphs">Cube.4</text>
<text x="1308" y="294" textLength="34" lengthAdjust="spacingAndGlyphs">Cube.2</text>
<text x="1308" y="320" textLength="25" lengthAdjust="spacingAndGlyphs">Cube</text>
<text x="1308" y="346" textLength="34" lengthAdjust="spacingAndGlyphs">Cube.1</text>
<text x="1308" y="372" textLength="31" lengthAdjust="spacingAndGlyphs">Parete</text>

<!-- row icons -->
<use href="#boole" x="1377" y="100" width="18" height="18"/><use href="#dots" x="1403" y="100" width="6" height="14"/><use href="#check" x="1413" y="101" width="10" height="12"/>
<use href="#cube" x="1377" y="124" width="18" height="19"/><use href="#dots" x="1403" y="127" width="6" height="14"/><use href="#check" x="1413" y="127" width="10" height="12"/><use href="#tag" x="1430" y="124" width="18" height="16"/>
<use href="#cube" x="1377" y="150" width="18" height="19"/><use href="#dots" x="1403" y="153" width="6" height="14"/><use href="#check" x="1413" y="153" width="10" height="12"/><use href="#tag" x="1430" y="150" width="18" height="16"/>
<use href="#nullo" x="1378" y="176" width="18" height="20"/><use href="#dots" x="1403" y="178" width="6" height="14"/>
<use href="#boole" x="1377" y="204" width="18" height="18"/><use href="#dots" x="1403" y="204" width="6" height="14"/><use href="#check" x="1413" y="205" width="10" height="12"/>
<use href="#cube" x="1377" y="228" width="18" height="19"/><use href="#dots" x="1403" y="231" width="6" height="14"/><use href="#check" x="1413" y="231" width="10" height="12"/><use href="#tag" x="1430" y="228" width="18" height="16"/>
<use href="#cube" x="1377" y="254" width="18" height="19"/><use href="#dots" x="1403" y="256" width="6" height="14"/><use href="#check" x="1413" y="257" width="10" height="12"/><use href="#tag" x="1430" y="254" width="18" height="16"/>
<use href="#cube" x="1377" y="280" width="18" height="19"/><use href="#dots" x="1403" y="282" width="6" height="14"/><use href="#check" x="1413" y="283" width="10" height="12"/><use href="#tag" x="1430" y="280" width="18" height="16"/>
<use href="#cube" x="1377" y="306" width="18" height="19"/><use href="#dots" x="1403" y="308" width="6" height="14"/><use href="#check" x="1413" y="309" width="10" height="12"/><use href="#tag" x="1430" y="306" width="18" height="16"/>
<use href="#cube" x="1377" y="332" width="18" height="19"/><use href="#dots" x="1403" y="334" width="6" height="14"/><use href="#check" x="1413" y="335" width="10" height="12"/><use href="#tag" x="1430" y="332" width="18" height="16"/>
<use href="#cube" x="1377" y="358" width="18" height="19"/><use href="#dots" x="1403" y="360" width="6" height="14"/><use href="#check" x="1413" y="361" width="10" height="12"/><use href="#tag" x="1430" y="358" width="18" height="16"/>

<!-- scrollbar -->
<rect x="1293" y="399" width="355" height="11" fill="#97a3b8"/><rect x="1293" y="399" width="11" height="11" fill="#a9a9a9" stroke="#8c8c8c"/><polygon points="1296,404.500 1301,401 1301,408" fill="#777"/>
<rect x="1292" y="413" width="356" height="1" fill="#d0d0d0"/>

<!-- attribute manager -->
<use href="#pin" x="1296" y="417" width="16" height="14"/>
<text x="1319" y="428" textLength="27" lengthAdjust="spacingAndGlyphs">Mode</text>
<text x="1361" y="428" textLength="18" lengthAdjust="spacingAndGlyphs">Edit</text>
<text x="1393" y="428" textLength="47" lengthAdjust="spacingAndGlyphs">User Data</text>
<path d="M1569 423L1575 418V421H1581V426H1575V429Z" fill="#d8d8d8" stroke="#111"/>
<path d="M1600 423L1594 418V421H1588V426H1594V429Z" fill="#b4b4b4" stroke="#999"/>
<path d="M1619 418L1625 424H1622V430H1616V424H1613Z" fill="#b4b4b4" stroke="#999"/>
<rect x="1640" y="423" width="9" height="9" fill="none" stroke="#333"/><path d="M1642 423V419Q1642 416 1645 416Q1648 416 1648 419" fill="none" stroke="#333"/>
<rect x="1292" y="434" width="356" height="1" fill="#d0d0d0"/>
<use href="#nullo" x="1297" y="439" width="18" height="20"/>
<text x="1320" y="452" textLength="122" lengthAdjust="spacingAndGlyphs">Null Object [Null Object.1]</text>
<rect x="1295" y="462" width="116" height="17" fill="url(#btn)"/><rect x="1373" y="462" width="38" height="17" fill="#f4f4f4"/>
<rect x="1294.500" y="461.500" width="117" height="17" fill="none" stroke="#555"/><path d="M1333.500 462V478M1372.500 462V478" stroke="#555"/>
<text x="1301" y="474" textLength="25" lengthAdjust="spacingAndGlyphs">Basic</text>
<text x="1338" y="474" textLength="29" lengthAdjust="spacingAndGlyphs">Coord.</text>
<text x="1377" y="474" textLength="31" lengthAdjust="spacingAndGlyphs">Object</text>
<rect x="1294" y="484" width="354" height="15" fill="url(#band)"/>
<text x="1297" y="496" textLength="97" lengthAdjust="spacingAndGlyphs" style="font-weight:bold">Object Properties</text>
<circle cx="1299.500" cy="513" r="2.500" fill="none" stroke="#888"/>
<text x="1306" y="517" textLength="33" lengthAdjust="spacingAndGlyphs">Display</text>
<rect x="1370.500" y="503.500" width="148" height="19" rx="3" fill="url(#btn)" stroke="#55688c"/><rect x="1500" y="504" width="1" height="18" fill="#55688c"/>
<text x="1374" y="518" textLength="17" lengthAdjust="spacingAndGlyphs">Dot</text>
<path d="M1508.500 509l-3 3.500h6zM1508.500 518l-3-3.500h6z" fill="#111"/>
<text x="1306" y="537" class="g" textLength="32" lengthAdjust="spacingAndGlyphs">Radius</text>
<rect x="1370.500" y="525.500" width="53" height="15" fill="#a8a8a8" stroke="#999"/><text x="1373" y="537" class="g" textLength="22" lengthAdjust="spacingAndGlyphs">10 m</text>
<rect x="1424.500" y="525.500" width="10" height="15" rx="2" fill="#98a2b3" stroke="#7f8a9c"/><path d="M1429.500 528l-2.500 3h5zM1429.500 538l-2.500-3h5z" fill="#555"/>
<text x="1305" y="555" class="g" textLength="61" lengthAdjust="spacingAndGlyphs">Aspect Ratio</text>
<rect x="1370.500" y="543.500" width="53" height="15" fill="#a8a8a8" stroke="#999"/><text x="1373" y="555" class="g">1</text>
<rect x="1424.500" y="543.500" width="10" height="15" rx="2" fill="#98a2b3" stroke="#7f8a9c"/><path d="M1429.500 546l-2.500 3h5zM1429.500 556l-2.500-3h5z" fill="#555"/>
<text x="1306" y="574" class="g" textLength="50" lengthAdjust="spacingAndGlyphs">Orientation</text>
<rect x="1370.500" y="561.500" width="74" height="19" rx="3" fill="#9aa5b8" stroke="#7f8a9c"/><rect x="1424" y="562" width="1" height="18" fill="#7f8a9c"/>
<text x="1374" y="575" class="g" textLength="36" lengthAdjust="spacingAndGlyphs">Camera</text>
<path d="M1433.500 567l-3 3h6zM1433.500 575l-3-3h6z" fill="#555"/>
</svg>
</body></html>
